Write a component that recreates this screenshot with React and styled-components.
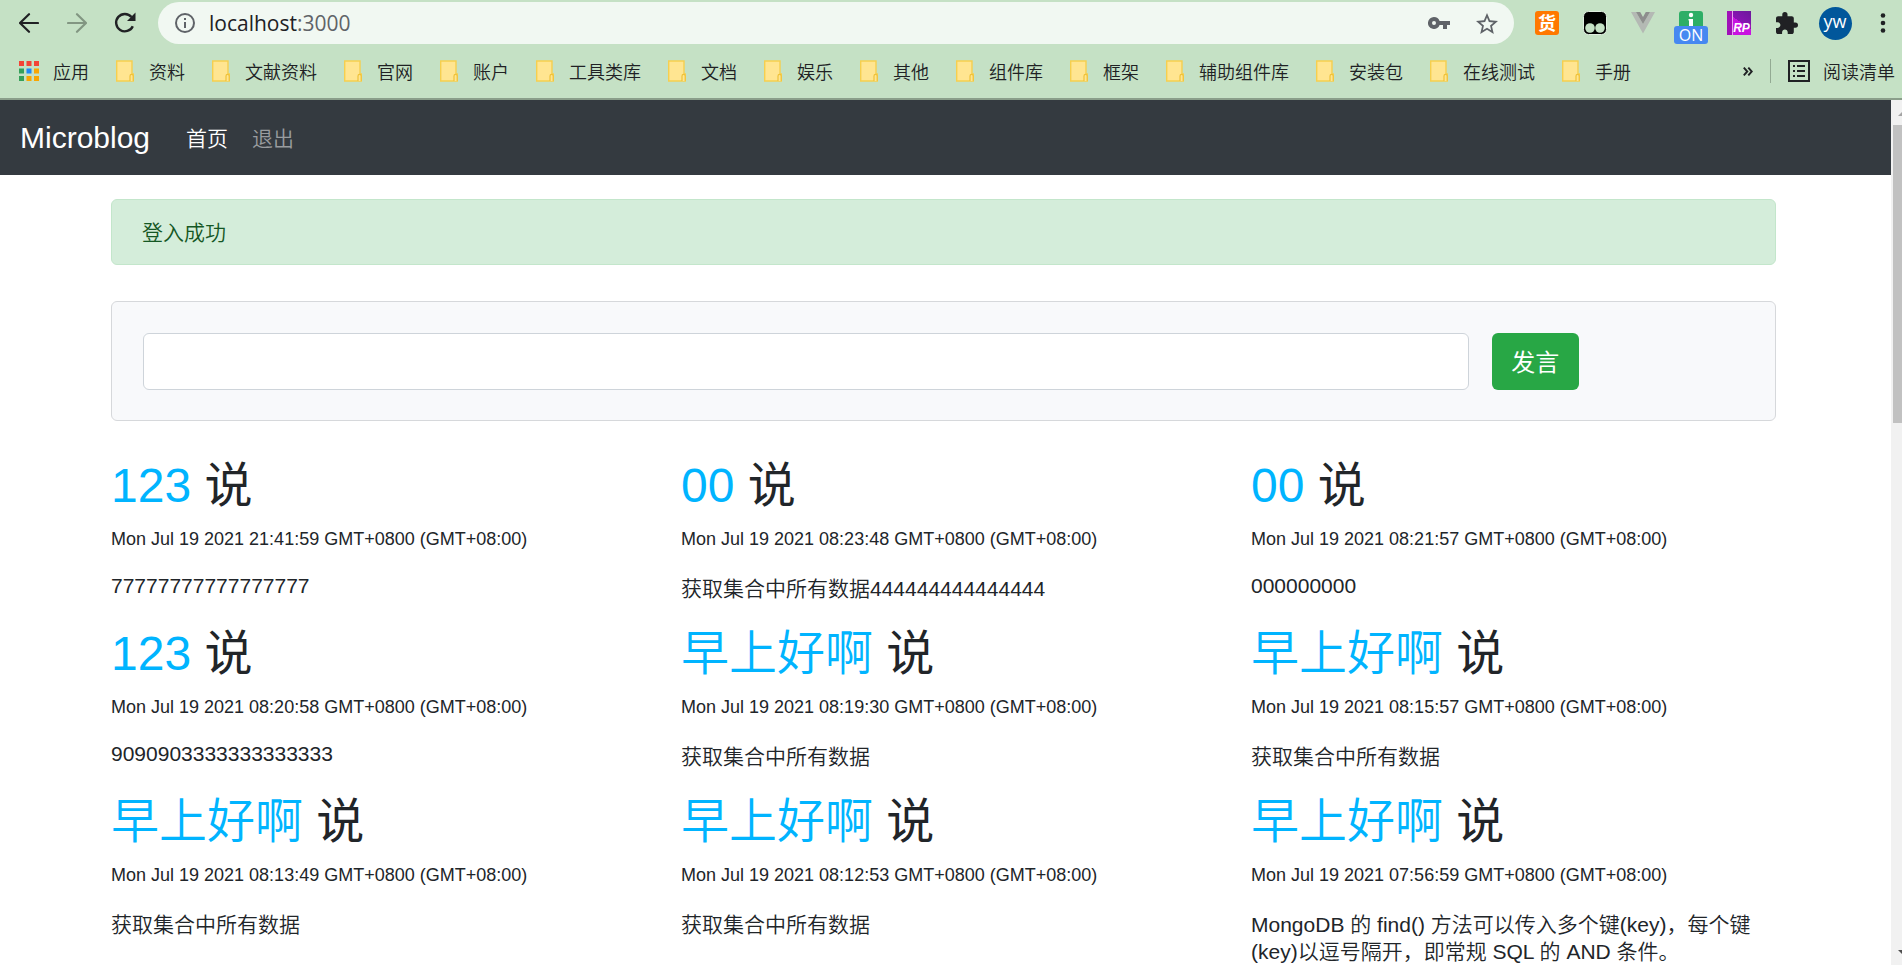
import React from 'react';
import styled, { createGlobalStyle } from 'styled-components'

const GlobalStyle = createGlobalStyle`
    * { box-sizing : border-box; }
    body {
        margin : 0;
        background : #fff;
        color : #212529;
        font-family : "Liberation Sans", "Noto Sans CJK SC", sans-serif;
        font-size : 21px;
        font-weight : 350;
    }
    a { color : inherit; text-decoration : none; }
    button { border : 0; padding : 0; background : none; font : inherit; color : inherit; }
    svg { display : block; flex : none; }
`;

/* 브라우저 상단 */
const Screen = styled.div`
    display : flex;
    flex-direction : column;
    height : 100vh;
    overflow : hidden;
`;
const Chrome = styled.header`
    flex : none;
    background : #c5e1c5;
    border-bottom : 2px solid #8a9e8a;
    color : #202124;
`;
const Toolbar = styled.div`
    display : flex;
    align-items : center;
    height : 46px;
    padding-left : 5px;
`;
const Cell = styled.button`
    display : flex;
    flex : none;
    align-items : center;
    justify-content : center;
    width : 48px;
    height : 46px;
`;
const Address = styled.div`
    display : flex;
    flex : 1;
    align-items : center;
    height : 42px;
    margin : 0 9px;
    padding : 0 3px 0 16px;
    border-radius : 21px;
    background : #f1f8f2;
    color : #5f6368;
`;
const Url = styled.div`
    flex : 1;
    margin-left : 13px;
    font-family : "Open Sans", sans-serif;
    font-size : 21px;
    font-weight : 400;
    line-height : 28px;
    b { color : #202124; font-weight : 400; }
`;
const Extensions = styled.div`
    display : flex;
    width : 379px;
    overflow : hidden;
`;
const Goods = styled.span`
    width : 24px;
    height : 24px;
    border-radius : 3px;
    background : #ff7800;
    color : #fff;
    font-size : 18px;
    font-weight : 700;
    line-height : 26px;
    text-align : center;
`;
const Switch = styled.span`
    display : flex;
    flex-direction : column;
    align-items : center;
    padding-top : 9px;
`;
const On = styled.span`
    width : 34px;
    height : 18px;
    border-radius : 3px;
    background : #4688f1;
    color : #fff;
    font-family : "Open Sans", sans-serif;
    font-size : 16px;
    font-weight : 400;
    line-height : 18px;
    text-align : center;
`;
const Axure = styled.span`
    width : 24px;
    height : 24px;
    padding : 9px 0 0 5px;
    background : linear-gradient(90deg, #a010b8 5px, #e8a0f0 5px, #e8a0f0 6px, transparent 6px),
        linear-gradient(35deg, #c814e0 55%, #8a12b4 55%, #6a1a9a);
    color : #fff;
    font-size : 12px;
    font-style : italic;
    font-weight : 700;
    line-height : 16px;
    text-align : center;
`;
const Avatar = styled.span`
    width : 33px;
    height : 33px;
    border-radius : 50%;
    background : #01579b;
    color : #fff;
    font-family : "Open Sans", sans-serif;
    font-size : 18px;
    font-weight : 400;
    line-height : 28px;
    text-align : center;
`;
const Bookmarks = styled.nav`
    display : flex;
    align-items : center;
    gap : 27px;
    height : 52px;
    padding : 0 7px 2px 19px;
    font-size : 18px;
    line-height : 24px;
    white-space : nowrap;
`;
const Bookmark = styled.a`
    display : flex;
    align-items : center;
    gap : ${props => props.$tight ? '13px' : '15px'};
`;
const Label = styled.span`
    padding-top : 3px;
`;
const More = styled.div`
    display : flex;
    align-items : center;
    gap : 17px;
    margin-left : auto;
`;
const Rule = styled.i`
    width : 1px;
    height : 24px;
    background : #93aa93;
`;

/* 페이지 */
const View = styled.div`
    display : flex;
    flex : 1;
    min-height : 0;
`;
const Page = styled.div`
    flex : 1;
    overflow : hidden;
`;
const Navbar = styled.nav`
    display : flex;
    align-items : center;
    gap : 24px;
    height : 75px;
    padding : 0 20px;
    background : #343a40;
    color : #fff;
`;
const Brand = styled.a`
    margin-right : 12px;
    font-size : 30px;
    line-height : 44px;
`;
const NavLink = styled.a`
    padding-top : 2px;
    color : ${props => props.$active ? '#fff' : '#999c9f'};
    line-height : 32px;
`;
const Container = styled.main`
    max-width : 1665px;
    margin : 24px auto 0;
`;
const Wrap = styled.div`
    padding : 0 26px 0 22px;
`;
const Alert = styled.div`
    margin-bottom : 36px;
    padding : 19px 30px 17px;
    border : 1px solid #c3e6cb;
    border-radius : 6px;
    background : #d4edda;
    color : #155724;
    line-height : 28px;
`;
const SayForm = styled.form`
    display : flex;
    gap : 23px;
    margin-bottom : 36px;
    padding : 31px 31px 30px;
    border : 1px solid #d6d8db;
    border-radius : 6px;
    background : #f8f9fb;
`;
const SayInput = styled.input`
    width : calc(83% - 3px);
    height : 57px;
    padding : 0 18px;
    border : 1px solid #ced4da;
    border-radius : 6px;
    background : #fff;
    font : inherit;
`;
const SayButton = styled.button`
    && {
        width : 87px;
        padding-bottom : 3px;
        border-radius : 6px;
        background : #28a745;
        color : #fff;
        font-size : 24px;
        font-weight : 400;
    }
`;
const Posts = styled.section`
    display : grid;
    grid-template-columns : repeat(3, 1fr);
    column-gap : 45px;
`;
const Post = styled.article`
    min-height : 168px;
`;
const Title = styled.h2`
    margin : 0 0 12px;
    font-size : 48px;
    font-weight : 400;
    line-height : 58px;
    a { color : #00b4ff; font-weight : 350; }
`;
const Time = styled.div`
    margin-bottom : 24px;
    font-size : 18px;
    line-height : 24px;
`;
const Text = styled.p`
    margin : 0;
    line-height : ${props => props.$latin ? '21px' : '27px'};
`;
const Scrollbar = styled.aside`
    display : flex;
    flex : none;
    flex-direction : column;
    justify-content : space-between;
    width : 11px;
    padding-left : 2px;
    overflow : hidden;
    background : #f1f1f1;
`;
const Thumb = styled.div`
    height : 298px;
    margin-bottom : auto;
    background : #c1c1c1;
`;

const folders = ['资料', '文献资料', '官网', '账户', '工具类库', '文档', '娱乐', '其他', '组件库', '框架', '辅助组件库', '安装包', '在线测试', '手册'];

const posts = [
    { user: '123', time: '21:41:59', text: '77777777777777777' },
    { user: '00', time: '08:23:48', text: '获取集合中所有数据444444444444444' },
    { user: '00', time: '08:21:57', text: '000000000' },
    { user: '123', time: '08:20:58', text: '9090903333333333333' },
    { user: '早上好啊', time: '08:19:30', text: '获取集合中所有数据' },
    { user: '早上好啊', time: '08:15:57', text: '获取集合中所有数据' },
    { user: '早上好啊', time: '08:13:49', text: '获取集合中所有数据' },
    { user: '早上好啊', time: '08:12:53', text: '获取集合中所有数据' },
    { user: '早上好啊', time: '07:56:59', text: 'MongoDB 的 find() 方法可以传入多个键(key)，每个键(key)以逗号隔开，即常规 SQL 的 AND 条件。' },
];

const appColors = ['#f44336', '#f44336', '#f44336', '#34a05a', '#1e88f5', '#f9a602', '#34a05a', '#f9a602', '#f9a602'];

const Arrow = ({ color, flip }) => (
    <svg width="20" height="20" viewBox="0 0 20 20" fill="none" stroke={color} strokeWidth="2.2" strokeLinecap="round" strokeLinejoin="round">
        <path d={flip ? 'M1 10H18.5M10 1.2L19 10L10 18.8' : 'M19 10H1.5M10 1.2L1 10L10 18.8'} />
    </svg>
);
const Folder = () => (
    <svg width="18" height="22" viewBox="0 0 18 22">
        <path d="M.7 1H16V14H17.3V21H.7Z" fill="#ffe591" stroke="#f6cf4f" strokeWidth="1.4" />
        <path d="M14 21V16Q14 14.3 15.6 14.3Q17.2 14.3 17.2 16V21" fill="#ffe591" stroke="#efc23a" strokeWidth="1.2" />
    </svg>
);

const App = () => {
    return (
        <Screen>
            <GlobalStyle />
            <Chrome>
                <Toolbar>
                    <Cell aria-label="back"><Arrow color="#202124" /></Cell>
                    <Cell aria-label="forward"><Arrow color="#829682" flip /></Cell>
                    <Cell aria-label="reload">
                        <svg width="22" height="22" viewBox="0 0 22 22">
                            <path d="M18.8 14.2A8.7 8.7 0 1 1 17.5 5" fill="none" stroke="#202124" strokeWidth="2.4" />
                            <path d="M21.5 .5V9H13Z" fill="#202124" />
                        </svg>
                    </Cell>
                    <Address>
                        <svg width="22" height="22" viewBox="0 0 22 22">
                            <circle cx="11" cy="11" r="9" fill="none" stroke="#5f6368" strokeWidth="2" />
                            <path d="M10 6H12V8H10ZM10 10H12V16H10Z" fill="#5f6368" />
                        </svg>
                        <Url><b>localhost</b>:3000</Url>
                        <Cell aria-label="password">
                            <svg width="22" height="12" viewBox="0 0 22 12">
                                <path d="M6 0A6 6 0 1 0 11.6 8H15V12H19V8H22V4H11.6A6 6 0 0 0 6 0ZM6 4A2 2 0 1 1 6 8A2 2 0 1 1 6 4Z" fill="#5f6368" fillRule="evenodd" />
                            </svg>
                        </Cell>
                        <Cell aria-label="bookmark">
                            <svg width="22" height="21" viewBox="2 2 20 19">
                                <path d="M22 9.24l-7.19-.62L12 2 9.19 8.63 2 9.24l5.46 4.73L5.82 21 12 17.27 18.18 21l-1.63-7.03L22 9.24zM12 15.4l-3.76 2.27 1-4.28-3.32-2.88 4.38-.38L12 6.1l1.71 4.04 4.38.38-3.32 2.88 1 4.28L12 15.4z" fill="#5f6368" />
                            </svg>
                        </Cell>
                    </Address>
                    <Extensions>
                        <Cell><Goods>货</Goods></Cell>
                        <Cell aria-label="monkey">
                            <svg width="24" height="24" viewBox="0 0 24 24">
                                <rect x=".5" y=".5" width="23" height="23" rx="5" fill="#000" stroke="#e0eee0" />
                                <circle cx="7" cy="17" r="4.8" fill="#c5e1c5" />
                                <circle cx="17" cy="17" r="4.8" fill="#c5e1c5" />
                            </svg>
                        </Cell>
                        <Cell aria-label="vue">
                            <svg width="24" height="22" viewBox="0 0 24 22">
                                <path d="M0 0H5L12 12L19 0H24L12 21.5Z" fill="#b4b9b4" />
                                <path d="M5 0H9.2L12 5L14.8 0H19L12 12Z" fill="#8e8e8e" />
                            </svg>
                        </Cell>
                        <Cell>
                            <Switch>
                                <svg width="24" height="15" viewBox="0 0 24 15">
                                    <path d="M3 0H21Q24 0 24 3V15H0V3Q0 0 3 0Z" fill="#2eae66" />
                                    <circle cx="12" cy="4" r="2.2" fill="#fff" />
                                    <path d="M9.5 8H14V15H10V9.5H9.5Z" fill="#fff" />
                                </svg>
                                <On>ON</On>
                            </Switch>
                        </Cell>
                        <Cell><Axure>RP</Axure></Cell>
                        <Cell aria-label="extensions">
                            <svg width="22" height="22" viewBox="2 1 21 21">
                                <path d="M20.5 11H19V7c0-1.1-.9-2-2-2h-4V3.5a2.5 2.5 0 0 0-5 0V5H4c-1.1 0-1.990.9-1.990 2v3.8H3.5c1.49 0 2.7 1.21 2.7 2.7s-1.21 2.7-2.7 2.7H2V20c0 1.1.9 2 2 2h3.8v-1.5c0-1.49 1.21-2.7 2.7-2.7s2.7 1.21 2.7 2.7V22H17c1.1 0 2-.9 2-2v-4h1.5a2.5 2.5 0 0 0 0-5z" fill="#202124" />
                            </svg>
                        </Cell>
                        <Cell><Avatar>yw</Avatar></Cell>
                        <Cell aria-label="menu">
                            <svg width="6" height="20" viewBox="0 0 6 20" fill="#202124">
                                <circle cx="3" cy="2.5" r="2.3" />
                                <circle cx="3" cy="10" r="2.3" />
                                <circle cx="3" cy="17.5" r="2.3" />
                            </svg>
                        </Cell>
                    </Extensions>
                </Toolbar>
                <Bookmarks>
                    <Bookmark href="#" $tight>
                        <svg width="21" height="20" viewBox="0 0 21 20">
                            {appColors.map((color, i) => (
                                <rect key={i} x={(i % 3) * 7.5} y={Math.floor(i / 3) * 7.5} width="5" height="5" fill={color} />
                            ))}
                        </svg>
                        <Label>应用</Label>
                    </Bookmark>
                    {folders.map(name => (
                        <Bookmark href="#" key={name}><Folder /><Label>{name}</Label></Bookmark>
                    ))}
                    <More>
                        <svg width="10" height="9" viewBox="0 0 10 9" fill="none" stroke="#202124" strokeWidth="1.9">
                            <path d="M.8 .6L4.3 4.5L.8 8.4M5.3 .6L8.8 4.5L5.3 8.4" />
                        </svg>
                        <Rule />
                        <Bookmark href="#" $tight>
                            <svg width="22" height="22" viewBox="0 0 22 22" fill="#202124">
                                <path d="M0 0H22V22H0ZM2 2V20H20V2Z" fillRule="evenodd" />
                                <path d="M5 5H7V7H5ZM9 5H17V7H9ZM5 10H7V12H5ZM9 10H17V12H9ZM5 15H7V17H5ZM9 15H17V17H9Z" />
                            </svg>
                            <Label>阅读清单</Label>
                        </Bookmark>
                    </More>
                </Bookmarks>
            </Chrome>
            <View>
                <Page>
                    <Navbar>
                        <Brand href="#">Microblog</Brand>
                        <NavLink href="#" $active>首页</NavLink>
                        <NavLink href="#">退出</NavLink>
                    </Navbar>
                    <Wrap>
                        <Container>
                            <Alert>登入成功</Alert>
                            <SayForm onSubmit={e => e.preventDefault()}>
                                <SayInput type="text" aria-label="发言" />
                                <SayButton type="submit">发言</SayButton>
                            </SayForm>
                            <Posts>
                                {posts.map(post => (
                                    <Post key={post.time}>
                                        <Title><a href="#">{post.user}</a> 说</Title>
                                        <Time>Mon Jul 19 2021 {post.time} GMT+0800 (GMT+08:00)</Time>
                                        <Text $latin={/^\d+$/.test(post.text)}>{post.text}</Text>
                                    </Post>
                                ))}
                            </Posts>
                        </Container>
                    </Wrap>
                </Page>
                <Scrollbar>
                    <svg width="22" height="25" viewBox="0 0 22 25"><path d="M5 16L11 10L17 16Z" fill="#a3a3a3" /></svg>
                    <Thumb />
                    <svg width="22" height="25" viewBox="0 0 22 25"><path d="M5 10L11 16L17 10Z" fill="#505050" /></svg>
                </Scrollbar>
            </View>
        </Screen>
    );
};

export default App;
